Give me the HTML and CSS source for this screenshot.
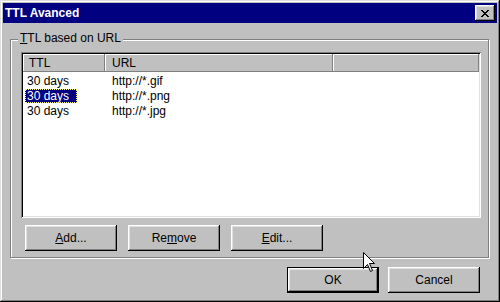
FILE: index.html
```html
<!DOCTYPE html>
<html>
  <head>
    <meta charset="UTF-8">
    <title>TTL Avanced</title>
    <link rel="stylesheet" href="styles.css">
  </head>
  <body>

    <div class="window">
      <div class="titlebar">
        <span class="title">TTL Avanced</span>
        <span class="close">
          <svg width="8" height="7" viewBox="0 0 8 7" shape-rendering="crispEdges">
            <path d="M0 0h2v1h1v1h2v-1h1v-1h2v1h-1v1h-1v1h-1v1h1v1h1v1h1v1h-2v-1h-1v-1h-2v1h-1v1h-2v-1h1v-1h1v-1h1v-1h-1v-1h-1v-1h-1z" fill="#000"/>
          </svg>
        </span>
      </div>

      <div class="group">
        <span class="group-label"><u>T</u>TL based on URL</span>

        <div class="list">
          <div class="columns">
            <span class="column">TTL</span>
            <span class="column">URL</span>
            <span class="column"></span>
          </div>
          <div class="entries">
            <div class="entry">
              <span class="ttl"><span class="label">30 days</span></span>
              <span class="url">http://*.gif</span>
            </div>
            <div class="entry">
              <span class="ttl"><span class="label selected">30 days</span></span>
              <span class="url">http://*.png</span>
            </div>
            <div class="entry">
              <span class="ttl"><span class="label">30 days</span></span>
              <span class="url">http://*.jpg</span>
            </div>
          </div>
        </div>

        <div class="actions">
          <a href="#add" class="button"><u>A</u>dd...</a>
          <a href="#remove" class="button">Re<u>m</u>ove</a>
          <a href="#edit" class="button"><u>E</u>dit...</a>
        </div>
      </div>

      <div class="footer">
        <a href="#ok" class="button default">OK</a>
        <a href="#cancel" class="button">Cancel</a>
      </div>

      <svg class="cursor" width="13" height="20" viewBox="0 0 13 20">
        <path d="M0.5 0.5V16.5L4.5 12.5L7.5 19.5L9.5 18.5L6.5 11.5H11.5Z" fill="#fff" stroke="#000" stroke-width="1"/>
      </svg>
    </div>

  </body>
</html>
```

FILE: styles.css
```css
html, body {
  margin: 0;
  height: 100%;
}

body {
  background: #c0c0c0;
  font-family: "Liberation Sans", Arial, sans-serif;
  font-size: 12px;
  color: #000;
}

a {
  color: #000;
  text-decoration: none;
}

.window {
  position: relative;
  box-sizing: border-box;
  width: 500px;
  height: 302px;
  padding: 3px;
  background: #c0c0c0;
  box-shadow:
    inset -1px -1px #000,
    inset 1px 1px #dfdfdf,
    inset -2px -2px #808080,
    inset 2px 2px #fff;
  display: flex;
  flex-direction: column;
}

.titlebar {
  height: 20px;
  background: #000080;
  color: #fff;
  font-weight: bold;
  display: flex;
  align-items: center;
  justify-content: space-between;
  padding: 0 2px;
}

.close {
  width: 20px;
  height: 16px;
  background: #c0c0c0;
  box-shadow:
    inset -1px -1px #000,
    inset 1px 1px #fff,
    inset -2px -2px #808080,
    inset 2px 2px #dfdfdf;
  display: flex;
  align-items: center;
  justify-content: center;
}

.close svg {
  display: block;
  margin-top: 1px;
}

/* etched group box */
.group {
  box-sizing: border-box;
  width: 479px;
  height: 219px;
  margin: 16px 0 0 7px;
  border: 1px solid #808080;
  box-shadow: inset 1px 1px #fff, 1px 1px #fff;
  display: flex;
  flex-direction: column;
  align-items: flex-start;
}

.group-label {
  line-height: 14px;
  margin: -9px 0 0 7px;
  padding: 0 2px;
  background: #c0c0c0;
}

.list {
  box-sizing: border-box;
  width: 460px;
  height: 166px;
  margin: 7px 0 0 10px;
  padding: 2px;
  background: #fff;
  box-shadow:
    inset 1px 1px #808080,
    inset -1px -1px #fff,
    inset 2px 2px #000,
    inset -2px -2px #dfdfdf;
}

.columns, .entry {
  display: grid;
  grid-template-columns: 82px 228px 1fr;
}

.columns {
  height: 18px;
}

.column {
  background: #c0c0c0;
  line-height: 18px;
  padding-left: 6px;
  box-shadow: inset -1px -1px #808080, inset 1px 1px #fff;
}

.column + .column {
  padding-left: 7px;
}

.entries {
  margin-top: 2px;
}

.entry {
  height: 15px;
  line-height: 15px;
}

.label {
  display: inline-block;
  margin-left: 2px;
  padding: 0 8px 0 2px;
  line-height: 14px;
}

.label.selected {
  background: #000080;
  color: #fff;
  outline: 1px dotted #ffff80;
  outline-offset: -1px;
}

.url {
  padding-left: 7px;
}

.actions {
  display: flex;
  gap: 11px;
  margin: 7px 0 0 14px;
}

.button {
  box-sizing: border-box;
  width: 92px;
  height: 26px;
  display: flex;
  align-items: center;
  justify-content: center;
  background: #c0c0c0;
  box-shadow:
    inset -1px -1px #000,
    inset 1px 1px #fff,
    inset -2px -2px #808080,
    inset 2px 2px #dfdfdf;
}

.button.default {
  box-shadow:
    inset 0 0 0 1px #000,
    inset -2px -2px #000,
    inset 2px 2px #fff,
    inset -3px -3px #808080,
    inset 3px 3px #dfdfdf;
}

.footer {
  display: flex;
  justify-content: flex-end;
  gap: 9px;
  margin-top: 9px;
  padding-right: 17px;
}

.cursor {
  position: absolute;
  left: 363px;
  top: 252px;
}
```
